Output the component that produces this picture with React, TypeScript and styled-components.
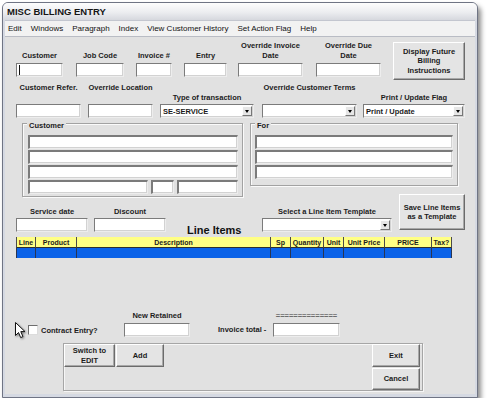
import styled, { createGlobalStyle } from 'styled-components';

const GlobalStyle = createGlobalStyle`
    html, body {
        margin: 0;
        padding: 0;
        background: #ffffff;
    }
    body {
        font-family: "Liberation Sans", Arial, sans-serif;
        color: #1b1b1b;
    }
`;

const Window = styled.div`
    margin: 2px 0 0 2px;
    width: 476px;
    height: 396px;
    box-sizing: border-box;
    border: 1px solid #6f7484;
    border-radius: 6px 6px 0 0;
    background: #d5d9e2;
    box-shadow: 3px 4px 5px rgba(0, 0, 0, 0.45);
    display: flex;
    flex-direction: column;
    overflow: hidden;
`;

const TitleBar = styled.div`
    height: 17px;
    flex: none;
    display: flex;
    align-items: center;
    padding-left: 4px;
    background: linear-gradient(#fdfdfd, #ecedf0 55%, #d6d8de);
    font-size: 9.5px;
    font-weight: bold;
    color: #151515;
`;

const MenuBar = styled.div`
    height: 15px;
    flex: none;
    margin: 0 2px;
    padding-left: 3px;
    border-top: 1px solid #c3c6cf;
    border-bottom: 1px solid #b9bcc4;
    background: #f2f2f2;
    display: flex;
    align-items: center;
    gap: 9px;
    font-size: 8px;
    color: #111;
`;

const Client = styled.div`
    position: relative;
    flex: 1;
    margin: 0 2px 3px;
    background: #e1e1e1;
`;

const Row = styled.div<{ $mt: number; $pl: number; $h?: number; $end?: boolean }>`
    display: flex;
    align-items: ${({ $end }) => ($end ? 'flex-end' : 'flex-start')};
    margin-top: ${({ $mt }) => $mt}px;
    padding-left: ${({ $pl }) => $pl}px;
    height: ${({ $h }) => ($h ? `${$h}px` : 'auto')};
`;

const Field = styled.div<{ $w: number; $ml?: number }>`
    flex: none;
    width: ${({ $w }) => $w}px;
    margin-left: ${({ $ml }) => $ml ?? 0}px;
    display: flex;
    flex-direction: column;
`;

const Caption = styled.div<{ $h?: number; $pb?: number; $muted?: boolean }>`
    height: ${({ $h }) => ($h ? `${$h}px` : 'auto')};
    padding-bottom: ${({ $pb }) => $pb ?? 1}px;
    box-sizing: border-box;
    display: flex;
    flex-direction: column;
    justify-content: flex-end;
    align-items: center;
    white-space: nowrap;
    font-size: 7.5px;
    font-weight: bold;
    line-height: 10px;
    color: ${({ $muted }) => ($muted ? '#6d6d6d' : '#1c1c1c')};
`;

const TextBox = styled.div<{ $w?: number; $deep?: boolean }>`
    flex: none;
    width: ${({ $w }) => ($w ? `${$w}px` : 'auto')};
    height: 14px;
    box-sizing: border-box;
    background: #ffffff;
    border-style: solid;
    border-width: ${({ $deep }) => ($deep ? '2px 1px 1px 2px' : '1px')};
    border-color: #7b7b7b #ededed #ededed #7b7b7b;
    box-shadow: inset -1px -1px 0 #d2d2d2;
    display: flex;
    align-items: center;
    padding-left: 2px;
`;

const Caret = styled.span`
    width: 1px;
    height: 10px;
    background: #111;
`;

const SelectBox = styled(TextBox)`
    padding: 0 1px 0 2px;
`;

const SelectValue = styled.span`
    flex: 1;
    font-size: 7.5px;
    font-weight: bold;
    white-space: nowrap;
`;

const DropButton = styled.span`
    width: 10px;
    height: 10px;
    box-sizing: border-box;
    border: 1px solid;
    border-color: #fdfdfd #777 #777 #fdfdfd;
    background: #e6e6e6;
    display: flex;
    align-items: center;
    justify-content: center;

    &::after {
        content: '';
        border-left: 2.5px solid transparent;
        border-right: 2.5px solid transparent;
        border-top: 3px solid #000;
    }
`;

const Button = styled.div<{ $w: number; $h: number; $ml?: number }>`
    flex: none;
    width: ${({ $w }) => $w}px;
    height: ${({ $h }) => $h}px;
    margin-left: ${({ $ml }) => $ml ?? 0}px;
    box-sizing: border-box;
    border: 1px solid;
    border-color: #ffffff #6b6b6b #6b6b6b #ffffff;
    box-shadow: inset -1px -1px 0 #a8a8a8;
    background: #e4e4e4;
    display: flex;
    align-items: center;
    justify-content: center;
    text-align: center;
    font-size: 7.5px;
    font-weight: bold;
    line-height: 9.5px;
    color: #1b1b1b;
`;

const SaveButton = styled(Button)`
    align-self: flex-start;
    margin-top: -5px;
    line-height: 9px;
`;

const GroupBox = styled.div<{ $w: number; $ml?: number; $pb: number; $pl: number }>`
    position: relative;
    flex: none;
    width: ${({ $w }) => $w}px;
    margin-left: ${({ $ml }) => $ml ?? 0}px;
    box-sizing: border-box;
    padding: 11px 4px ${({ $pb }) => $pb}px ${({ $pl }) => $pl}px;
    border: 1px solid #a2a2a2;
    box-shadow: inset 1px 1px 0 #fafafa, 1px 1px 0 #fafafa;
    display: flex;
    flex-direction: column;
    gap: 1px;
`;

const Legend = styled.span`
    position: absolute;
    top: -3px;
    left: 4px;
    padding: 0 2px;
    background: #e1e1e1;
    font-size: 7.5px;
    font-weight: bold;
    line-height: 9px;
`;

const SplitLine = styled.div`
    display: flex;
    gap: 3px;
`;

const SectionTitle = styled.div`
    flex: none;
    width: 54px;
    margin-left: 21px;
    margin-bottom: -4px;
    font-size: 11px;
    font-weight: bold;
    line-height: 12px;
    white-space: nowrap;
    color: #111;
`;

const ItemsGrid = styled.div`
    margin: 5px 0 0 11px;
    width: 436px;
    display: grid;
    grid-template-columns: 20px 41px 194px 20px 33px 20px 41px 47px 20px;
    grid-template-rows: 11px 10px;
`;

const HeadCell = styled.div`
    box-sizing: border-box;
    background: #ffff84;
    border-right: 1px solid #4a4a4a;
    border-bottom: 1px solid #2e2e2e;
    display: flex;
    align-items: center;
    justify-content: center;
    font-size: 7px;
    font-weight: bold;
    white-space: nowrap;
    overflow: hidden;

    &:first-child {
        border-left: 1px solid #4a4a4a;
    }
`;

const BodyCell = styled.div<{ $first?: boolean }>`
    box-sizing: border-box;
    background: #0b62e8;
    border-right: 1px solid #2a3550;
    border-left: ${({ $first }) => ($first ? '1px solid #2a3550' : 'none')};
`;

const CheckBox = styled.span`
    flex: none;
    width: 10px;
    height: 10px;
    margin-bottom: 2px;
    box-sizing: border-box;
    background: #fff;
    border: 1px solid;
    border-color: #6e6e6e #dcdcdc #dcdcdc #6e6e6e;
`;

const InlineLabel = styled.span<{ $w: number; $ml: number; $mb: number }>`
    flex: none;
    width: ${({ $w }) => $w}px;
    margin-left: ${({ $ml }) => $ml}px;
    margin-bottom: ${({ $mb }) => $mb}px;
    font-size: 7.5px;
    font-weight: bold;
    line-height: 10px;
    white-space: nowrap;
`;

const CommandPanel = styled.div`
    margin: 6px 0 0 58px;
    width: 360px;
    height: 48px;
    box-sizing: border-box;
    border: 1px solid #a6a6a6;
    box-shadow: inset 1px 1px 0 #f6f6f6, 1px 1px 0 #f6f6f6;
    display: flex;
    justify-content: space-between;
    padding-right: 2px;
`;

const ButtonGroup = styled.div<{ $stack?: boolean }>`
    display: flex;
    flex-direction: ${({ $stack }) => ($stack ? 'column' : 'row')};
    gap: 1px;
`;

const Pointer = styled.svg`
    position: absolute;
    left: 10px;
    top: 285px;
    filter: drop-shadow(1px 1px 1px rgba(0, 0, 0, 0.45));
`;

const menuItems = ['Edit', 'Windows', 'Paragraph', 'Index', 'View Customer History', 'Set Action Flag', 'Help'];

const columns = ['Line', 'Product', 'Description', 'Sp', 'Quantity', 'Unit', 'Unit Price', 'PRICE', 'Tax?'];

const Select = ({ w, ml, value }: { w: number; ml?: number; value?: string }) => (
    <SelectBox $w={w} style={ml ? { marginLeft: ml } : undefined}>
        <SelectValue>{value}</SelectValue>
        <DropButton />
    </SelectBox>
);

const App = () => {
    return (
        <>
            <GlobalStyle />
            <Window>
                <TitleBar>MISC BILLING ENTRY</TitleBar>
                <MenuBar>
                    {menuItems.map((item) => (
                        <span key={item}>{item}</span>
                    ))}
                </MenuBar>
                <Client>
                    <Row $mt={5} $pl={11}>
                        <Field $w={47}>
                            <Caption $h={21} $pb={2}>Customer</Caption>
                            <TextBox>
                                <Caret />
                            </TextBox>
                        </Field>
                        <Field $w={48} $ml={13}>
                            <Caption $h={21} $pb={2}>Job Code</Caption>
                            <TextBox />
                        </Field>
                        <Field $w={36} $ml={12}>
                            <Caption $h={21} $pb={2}>Invoice #</Caption>
                            <TextBox />
                        </Field>
                        <Field $w={43} $ml={12}>
                            <Caption $h={21} $pb={2}>Entry</Caption>
                            <TextBox />
                        </Field>
                        <Field $w={65} $ml={11}>
                            <Caption $h={21} $pb={2}>
                                <span>Override Invoice</span>
                                <span>Date</span>
                            </Caption>
                            <TextBox />
                        </Field>
                        <Field $w={65} $ml={13}>
                            <Caption $h={21} $pb={2}>
                                <span>Override Due</span>
                                <span>Date</span>
                            </Caption>
                            <TextBox />
                        </Field>
                        <Button $w={72} $h={38} $ml={12}>
                            Display Future
                            <br />
                            Billing
                            <br />
                            Instructions
                        </Button>
                    </Row>

                    <Row $mt={2} $pl={11}>
                        <Field $w={65}>
                            <Caption $h={22} $pb={11}>Customer Refer.</Caption>
                            <TextBox />
                        </Field>
                        <Field $w={65} $ml={7}>
                            <Caption $h={22} $pb={11}>Override Location</Caption>
                            <TextBox />
                        </Field>
                        <Field $w={94} $ml={7}>
                            <Caption $h={22} $pb={1}>Type of transaction</Caption>
                            <Select w={94} value="SE-SERVICE" />
                        </Field>
                        <Field $w={95} $ml={8}>
                            <Caption $h={22} $pb={11}>Override Customer Terms</Caption>
                            <Select w={95} />
                        </Field>
                        <Field $w={102} $ml={6}>
                            <Caption $h={22} $pb={1}>Print / Update Flag</Caption>
                            <Select w={102} value="Print / Update" />
                        </Field>
                    </Row>

                    <Row $mt={5} $pl={17}>
                        <GroupBox $w={221} $pb={2} $pl={5}>
                            <Legend>Customer</Legend>
                            <TextBox $deep />
                            <TextBox $deep />
                            <TextBox $deep />
                            <SplitLine>
                                <TextBox $deep $w={120} />
                                <TextBox $deep $w={23} />
                                <TextBox $deep $w={61} />
                            </SplitLine>
                        </GroupBox>
                        <GroupBox $w={208} $ml={7} $pb={6} $pl={4}>
                            <Legend>For</Legend>
                            <TextBox $deep />
                            <TextBox $deep />
                            <TextBox $deep />
                        </GroupBox>
                    </Row>

                    <Row $mt={2} $pl={11} $h={33} $end>
                        <Field $w={72}>
                            <Caption>Service date</Caption>
                            <TextBox />
                        </Field>
                        <Field $w={72} $ml={6}>
                            <Caption>Discount</Caption>
                            <TextBox />
                        </Field>
                        <SectionTitle>Line Items</SectionTitle>
                        <Field $w={130} $ml={21}>
                            <Caption>Select a Line Item Template</Caption>
                            <Select w={130} />
                        </Field>
                        <SaveButton $w={66} $h={36} $ml={7}>
                            Save Line Items
                            <br />
                            as a Template
                        </SaveButton>
                    </Row>

                    <ItemsGrid>
                        {columns.map((col) => (
                            <HeadCell key={col}>{col}</HeadCell>
                        ))}
                        {columns.map((col, i) => (
                            <BodyCell key={col} $first={i === 0} />
                        ))}
                    </ItemsGrid>

                    <Row $mt={53} $pl={23} $end>
                        <CheckBox />
                        <InlineLabel $w={57} $ml={3} $mb={1}>
                            Contract Entry?
                        </InlineLabel>
                        <Field $w={66} $ml={26}>
                            <Caption $pb={2}>New Retained</Caption>
                            <TextBox />
                        </Field>
                        <InlineLabel $w={52} $ml={28} $mb={2}>
                            Invoice total -
                        </InlineLabel>
                        <Field $w={67} $ml={3}>
                            <Caption $pb={2} $muted>
                                ==============
                            </Caption>
                            <TextBox />
                        </Field>
                    </Row>

                    <CommandPanel>
                        <ButtonGroup>
                            <Button $w={51} $h={23}>
                                Switch to
                                <br />
                                EDIT
                            </Button>
                            <Button $w={48} $h={23}>
                                Add
                            </Button>
                        </ButtonGroup>
                        <ButtonGroup $stack>
                            <Button $w={48} $h={23}>
                                Exit
                            </Button>
                            <Button $w={48} $h={22}>
                                Cancel
                            </Button>
                        </ButtonGroup>
                    </CommandPanel>

                    {/* mouse pointer resting beside the checkbox */}
                    <Pointer width="12" height="18" viewBox="0 0 12 18">
                        <path
                            d="M0.5 0.5 L0.5 13.5 L3.5 10.5 L5.7 15.6 L7.9 14.6 L5.8 9.6 L10 9.6 Z"
                            fill="#ffffff"
                            stroke="#111111"
                            strokeWidth="1"
                            strokeLinejoin="miter"
                        />
                    </Pointer>
                </Client>
            </Window>
        </>
    );
};

export default App;
